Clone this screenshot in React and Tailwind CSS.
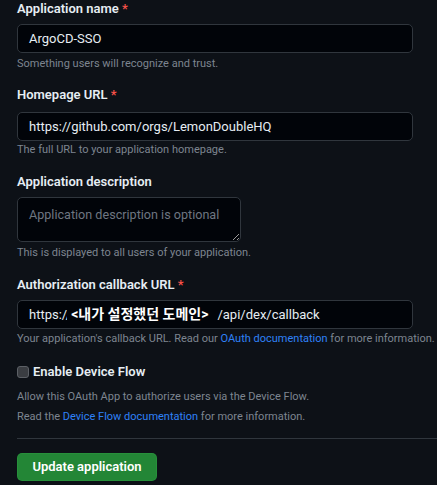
export default function App() {
  const font = { fontFamily: 'Roboto, "Noto Sans CJK KR", sans-serif' };
  return (
    <div className="w-[437px] h-[485px] bg-[#0d1117] overflow-hidden pl-[17px]" style={font}>
      <div className="text-[13px] leading-[18px] font-semibold text-[#e6edf3]">
        Application name <span className="text-[#f85149]">*</span>
      </div>
      <div className="mt-[6px] w-[396px] h-[29px] rounded-[5px] border border-[#30363d] bg-[#010409] flex items-center px-[11px] text-[13px] text-[#e6edf3]">
        ArgoCD-SSO
      </div>
      <div className="mt-[3px] text-[11px] leading-[16px] text-[#7d8590]">Something users will recognize and trust.</div>

      <div className="mt-[14px] text-[13px] leading-[18px] font-semibold text-[#e6edf3]">
        Homepage URL <span className="text-[#f85149]">*</span>
      </div>
      <div className="mt-[8px] w-[396px] h-[29px] rounded-[5px] border border-[#30363d] bg-[#010409] flex items-center px-[11px] text-[13px] text-[#e6edf3]">
        https://github.com/orgs/LemonDoubleHQ
      </div>
      <div className="mt-[1px] text-[11px] leading-[16px] text-[#7d8590]">The full URL to your application homepage.</div>

      <div className="mt-[15px] text-[13px] leading-[18px] font-semibold text-[#e6edf3]">Application description</div>
      <textarea
        readOnly
        wrap="off"
        placeholder="Application description is optional"
        className="mt-[6px] block w-[224px] h-[45px] rounded-[5px] border border-[#30363d] bg-[#010409] pl-[11px] pr-[4px] pt-[7px] pb-[2px] text-[12.6px] leading-[20px] text-[#e6edf3] placeholder:text-[#6e7681] outline-none resize-y overflow-hidden"
        style={font}
      />
      <div className="mt-[3px] text-[11px] leading-[16px] text-[#7d8590]">This is displayed to all users of your application.</div>

      <div className="mt-[15px] text-[13px] leading-[18px] font-semibold text-[#e6edf3]">
        Authorization callback URL <span className="text-[#f85149]">*</span>
      </div>
      <div className="mt-[6px] w-[396px] h-[29px] rounded-[5px] border border-[#30363d] bg-[#010409] flex items-center px-[11px] text-[13px] text-[#e6edf3] whitespace-nowrap">
        <span>https://</span>
        <span className="ml-[-4px] pl-[4px] pr-[9px] bg-[#010409] text-[14px] font-bold text-white">&lt;내가 설정했던 도메인&gt;</span>
        <span>/api/dex/callback</span>
      </div>
      <div className="mt-[2px] text-[11px] leading-[16px] text-[#7d8590] whitespace-nowrap">
        Your application's callback URL. Read our <span className="text-[#2f81f7]">OAuth documentation</span> for more information.
      </div>

      <div className="mt-[16px] flex items-center gap-[4px]">
        <span className="w-[12px] h-[12px] rounded-[3px] border border-[#5c6066] bg-[#3a3d42]" />
        <span className="text-[13px] leading-[18px] font-semibold text-[#e6edf3]">Enable Device Flow</span>
      </div>
      <div className="mt-[6px] text-[11px] leading-[20px] text-[#7d8590]">Allow this OAuth App to authorize users via the Device Flow.</div>
      <div className="text-[11px] leading-[20px] text-[#7d8590]">
        Read the <span className="text-[#2f81f7]">Device Flow documentation</span> for more information.
      </div>

      <div className="mt-[11px] h-px bg-[#30363d]" />

      <div className="mt-[14px] w-[140px] h-[28px] rounded-[5px] bg-[#238636] border border-[#2ea043]/40 flex items-center justify-center text-[13px] font-semibold text-white">
        Update application
      </div>
    </div>
  );
}
